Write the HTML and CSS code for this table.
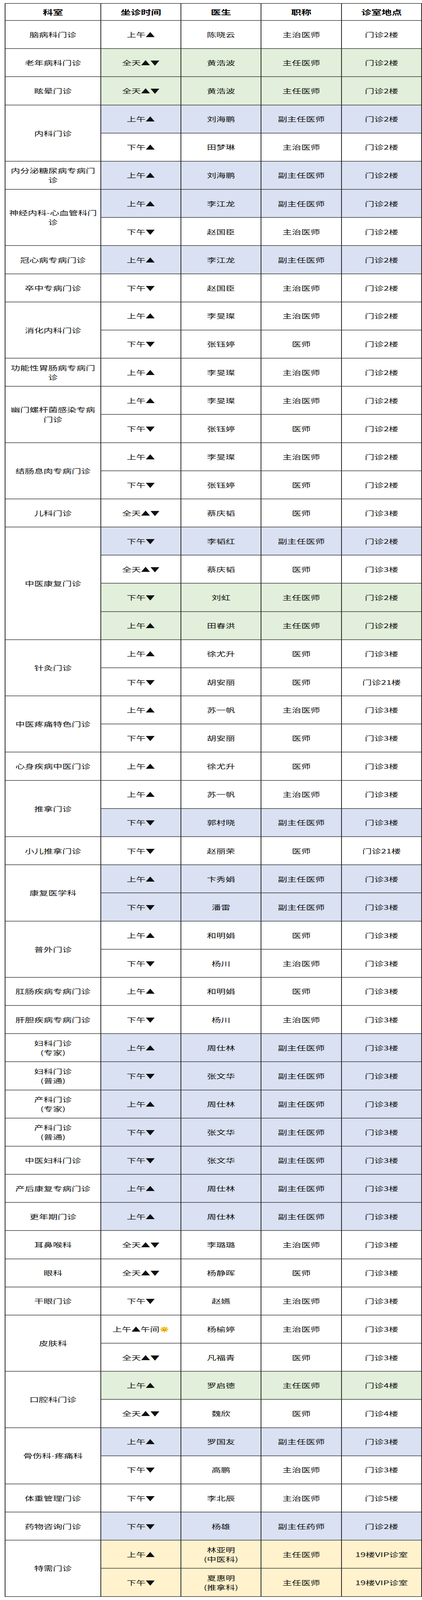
FILE: index.html
```html
<!DOCTYPE html>
<html lang="zh-CN">
<head>
<meta charset="utf-8">
<title>门诊排班表</title>
<link rel="stylesheet" href="styles.css">
</head>
<body>
<div class="frame">
<div class="page">
<div class="schedule">
  <div class="c hd">科室</div><div class="c hd">坐诊时间</div><div class="c hd">医生</div><div class="c hd">职称</div><div class="c hd">诊室地点</div>

  <div class="c dept">脑病科门诊</div><div class="c">上午▲</div><div class="c">陈晓云</div><div class="c">主治医师</div><div class="c">门诊2楼</div>
  <div class="c dept">老年病科门诊</div><div class="c g">全天▲▼</div><div class="c g">黄浩波</div><div class="c g">主任医师</div><div class="c g">门诊2楼</div>
  <div class="c dept">眩晕门诊</div><div class="c g">全天▲▼</div><div class="c g">黄浩波</div><div class="c g">主任医师</div><div class="c g">门诊2楼</div>

  <div class="c dept s2">内科门诊</div><div class="c b">上午▲</div><div class="c b">刘海鹏</div><div class="c b">副主任医师</div><div class="c b">门诊2楼</div>
  <div class="c">下午▲</div><div class="c">田梦琳</div><div class="c">主治医师</div><div class="c">门诊2楼</div>

  <div class="c dept">内分泌糖尿病专病门诊</div><div class="c b">上午▲</div><div class="c b">刘海鹏</div><div class="c b">副主任医师</div><div class="c b">门诊2楼</div>

  <div class="c dept s2">神经内科-心血管科门诊</div><div class="c b">上午▲</div><div class="c b">李江龙</div><div class="c b">副主任医师</div><div class="c b">门诊2楼</div>
  <div class="c">下午▼</div><div class="c">赵国臣</div><div class="c">主治医师</div><div class="c">门诊2楼</div>

  <div class="c dept">冠心病专病门诊</div><div class="c b">上午▲</div><div class="c b">李江龙</div><div class="c b">副主任医师</div><div class="c b">门诊2楼</div>
  <div class="c dept">卒中专病门诊</div><div class="c">下午▼</div><div class="c">赵国臣</div><div class="c">主治医师</div><div class="c">门诊2楼</div>

  <div class="c dept s2">消化内科门诊</div><div class="c">上午▲</div><div class="c">李旻璨</div><div class="c">主治医师</div><div class="c">门诊2楼</div>
  <div class="c">下午▼</div><div class="c">张钰婷</div><div class="c">医师</div><div class="c">门诊2楼</div>

  <div class="c dept">功能性胃肠病专病门诊</div><div class="c">上午▲</div><div class="c">李旻璨</div><div class="c">主治医师</div><div class="c">门诊2楼</div>

  <div class="c dept s2">幽门螺杆菌感染专病门诊</div><div class="c">上午▲</div><div class="c">李旻璨</div><div class="c">主治医师</div><div class="c">门诊2楼</div>
  <div class="c">下午▼</div><div class="c">张钰婷</div><div class="c">医师</div><div class="c">门诊2楼</div>

  <div class="c dept s2">结肠息肉专病门诊</div><div class="c">上午▲</div><div class="c">李旻璨</div><div class="c">主治医师</div><div class="c">门诊2楼</div>
  <div class="c">下午▼</div><div class="c">张钰婷</div><div class="c">医师</div><div class="c">门诊2楼</div>

  <div class="c dept">儿科门诊</div><div class="c">全天▲▼</div><div class="c">蔡庆韬</div><div class="c">医师</div><div class="c">门诊3楼</div>

  <div class="c dept s4">中医康复门诊</div><div class="c b">下午▼</div><div class="c b">李韬红</div><div class="c b">副主任医师</div><div class="c b">门诊2楼</div>
  <div class="c">全天▲▼</div><div class="c">蔡庆韬</div><div class="c">医师</div><div class="c">门诊3楼</div>
  <div class="c g">下午▼</div><div class="c g">刘虹</div><div class="c g">主任医师</div><div class="c g">门诊2楼</div>
  <div class="c g">上午▲</div><div class="c g">田春洪</div><div class="c g">主任医师</div><div class="c g">门诊2楼</div>

  <div class="c dept s2">针灸门诊</div><div class="c">上午▲</div><div class="c">徐尤升</div><div class="c">医师</div><div class="c">门诊3楼</div>
  <div class="c">下午▼</div><div class="c">胡安丽</div><div class="c">医师</div><div class="c">门诊21楼</div>

  <div class="c dept s2">中医疼痛特色门诊</div><div class="c">上午▲</div><div class="c">苏一帆</div><div class="c">主治医师</div><div class="c">门诊3楼</div>
  <div class="c">下午▼</div><div class="c">胡安丽</div><div class="c">医师</div><div class="c">门诊3楼</div>

  <div class="c dept">心身疾病中医门诊</div><div class="c">上午▲</div><div class="c">徐尤升</div><div class="c">医师</div><div class="c">门诊3楼</div>

  <div class="c dept s2">推拿门诊</div><div class="c">上午▲</div><div class="c">苏一帆</div><div class="c">主治医师</div><div class="c">门诊3楼</div>
  <div class="c b">下午▼</div><div class="c b">郭村晓</div><div class="c b">副主任医师</div><div class="c b">门诊3楼</div>

  <div class="c dept">小儿推拿门诊</div><div class="c">下午▼</div><div class="c">赵丽荣</div><div class="c">医师</div><div class="c">门诊21楼</div>

  <div class="c dept s2">康复医学科</div><div class="c b">上午▲</div><div class="c b">卞秀娟</div><div class="c b">副主任医师</div><div class="c b">门诊3楼</div>
  <div class="c b">下午▼</div><div class="c b">潘雷</div><div class="c b">副主任医师</div><div class="c b">门诊3楼</div>

  <div class="c dept s2">普外门诊</div><div class="c">上午▲</div><div class="c">和明娟</div><div class="c">医师</div><div class="c">门诊3楼</div>
  <div class="c">下午▼</div><div class="c">杨川</div><div class="c">主治医师</div><div class="c">门诊3楼</div>

  <div class="c dept">肛肠疾病专病门诊</div><div class="c">上午▲</div><div class="c">和明娟</div><div class="c">医师</div><div class="c">门诊3楼</div>
  <div class="c dept">肝胆疾病专病门诊</div><div class="c">下午▼</div><div class="c">杨川</div><div class="c">主治医师</div><div class="c">门诊3楼</div>

  <div class="c dept">妇科门诊<br>(专家)</div><div class="c b">上午▲</div><div class="c b">周仕林</div><div class="c b">副主任医师</div><div class="c b">门诊3楼</div>
  <div class="c dept">妇科门诊<br>(普通)</div><div class="c b">下午▼</div><div class="c b">张文华</div><div class="c b">副主任医师</div><div class="c b">门诊3楼</div>
  <div class="c dept">产科门诊<br>(专家)</div><div class="c b">上午▲</div><div class="c b">周仕林</div><div class="c b">副主任医师</div><div class="c b">门诊3楼</div>
  <div class="c dept">产科门诊<br>(普通)</div><div class="c b">下午▼</div><div class="c b">张文华</div><div class="c b">副主任医师</div><div class="c b">门诊3楼</div>
  <div class="c dept">中医妇科门诊</div><div class="c b">下午▼</div><div class="c b">张文华</div><div class="c b">副主任医师</div><div class="c b">门诊3楼</div>
  <div class="c dept">产后康复专病门诊</div><div class="c b">上午▲</div><div class="c b">周仕林</div><div class="c b">副主任医师</div><div class="c b">门诊3楼</div>
  <div class="c dept">更年期门诊</div><div class="c b">上午▲</div><div class="c b">周仕林</div><div class="c b">副主任医师</div><div class="c b">门诊3楼</div>

  <div class="c dept">耳鼻喉科</div><div class="c">全天▲▼</div><div class="c">李璐璐</div><div class="c">主治医师</div><div class="c">门诊3楼</div>
  <div class="c dept">眼科</div><div class="c">全天▲▼</div><div class="c">杨静晖</div><div class="c">医师</div><div class="c">门诊3楼</div>
  <div class="c dept">干眼门诊</div><div class="c">下午▼</div><div class="c">赵嬿</div><div class="c">主治医师</div><div class="c">门诊3楼</div>

  <div class="c dept s2">皮肤科</div><div class="c"><span>上午▲午间<svg class="sun" viewBox="0 0 24 24" role="img" aria-label="太阳"><g fill="#f2b300"><polygon points="12,0 14,5.2 10,5.2"/><polygon points="12,24 14,18.8 10,18.8"/><polygon points="0,12 5.2,10 5.2,14"/><polygon points="24,12 18.8,10 18.8,14"/><polygon points="3.5,3.5 8.6,5.6 5.6,8.6"/><polygon points="20.5,3.5 18.4,8.6 15.4,5.6"/><polygon points="3.5,20.5 5.6,15.4 8.6,18.4"/><polygon points="20.5,20.5 15.4,18.4 18.4,15.4"/></g><circle cx="12" cy="12" r="7.4" fill="#ffd43b" stroke="#d99a00" stroke-width="0.8"/><circle cx="9.4" cy="10.6" r="1" fill="#5a3500"/><circle cx="14.6" cy="10.6" r="1" fill="#5a3500"/><path d="M8.8 13.6 Q12 17 15.2 13.6" fill="none" stroke="#5a3500" stroke-width="1.1" stroke-linecap="round"/></svg></span></div><div class="c">杨榆婷</div><div class="c">主治医师</div><div class="c">门诊3楼</div>
  <div class="c">全天▲▼</div><div class="c">凡福青</div><div class="c">医师</div><div class="c">门诊3楼</div>

  <div class="c dept s2">口腔科门诊</div><div class="c g">上午▲</div><div class="c g">罗启德</div><div class="c g">主任医师</div><div class="c g">门诊4楼</div>
  <div class="c">全天▲▼</div><div class="c">魏欣</div><div class="c">医师</div><div class="c">门诊4楼</div>

  <div class="c dept s2"><span>骨伤科<span class="dot">·</span>疼痛科</span></div><div class="c b">上午▲</div><div class="c b">罗国友</div><div class="c b">副主任医师</div><div class="c b">门诊3楼</div>
  <div class="c">下午▼</div><div class="c">高鹏</div><div class="c">主治医师</div><div class="c">门诊3楼</div>

  <div class="c dept">体重管理门诊</div><div class="c">下午▼</div><div class="c">李北辰</div><div class="c">主治医师</div><div class="c">门诊5楼</div>
  <div class="c dept">药物咨询门诊</div><div class="c b">下午▼</div><div class="c b">杨雄</div><div class="c b">副主任药师</div><div class="c b">门诊2楼</div>

  <div class="c dept s2">特需门诊</div><div class="c y">上午▲</div><div class="c y">林亚明<br>(中医科)</div><div class="c y">主任医师</div><div class="c y">19楼VIP诊室</div>
  <div class="c y">下午▼</div><div class="c y">夏惠明<br>(推拿科)</div><div class="c y">主任医师</div><div class="c y">19楼VIP诊室</div>
</div>
</div>
</div>
</body>
</html>
```

FILE: styles.css
```css
html, body {
  background: #ffffff;
}
body {
  margin: 0;
  font-family: "Noto Sans CJK SC", "Noto Sans", sans-serif;
  color: #111111;
}
.frame {
  width: 1080px;
  overflow: hidden;
}
.page {
  width: 1080px;
  height: 6093px;
  box-sizing: border-box;
  padding: 12px 0 0 12px;
  transform-origin: 0 0;
}
@media (max-height: 6092px) {
  .frame {
    height: 100vh;
  }
  .page {
    transform: scaleY(0.672247);
  }
}
.schedule {
  display: grid;
  width: 1068px;
  box-sizing: border-box;
  grid-template-columns: 243px 203px 203px 204px 203px;
  grid-template-rows: 63px repeat(56, 105.18px);
  gap: 2px;
  padding: 2px;
  background: #262626;
}
.c {
  display: flex;
  align-items: center;
  justify-content: center;
  text-align: center;
  padding: 0 8px;
  background: #ffffff;
  font-size: 24px;
  line-height: 36px;
  font-weight: 400;
  min-width: 0;
  overflow: hidden;
}
.hd {
  font-size: 26px;
  font-weight: 700;
  color: #000000;
}
.dept {
  grid-column: 1;
}
.s2 { grid-row: span 2; }
.s4 { grid-row: span 4; }

.g { background: #e2efda; }
.b { background: #d9e1f2; }
.y { background: #fff2cc; }

.dot {
  font-family: "Liberation Sans", sans-serif;
}
.sun {
  width: 25px;
  height: 25px;
  vertical-align: -4px;
}
```
